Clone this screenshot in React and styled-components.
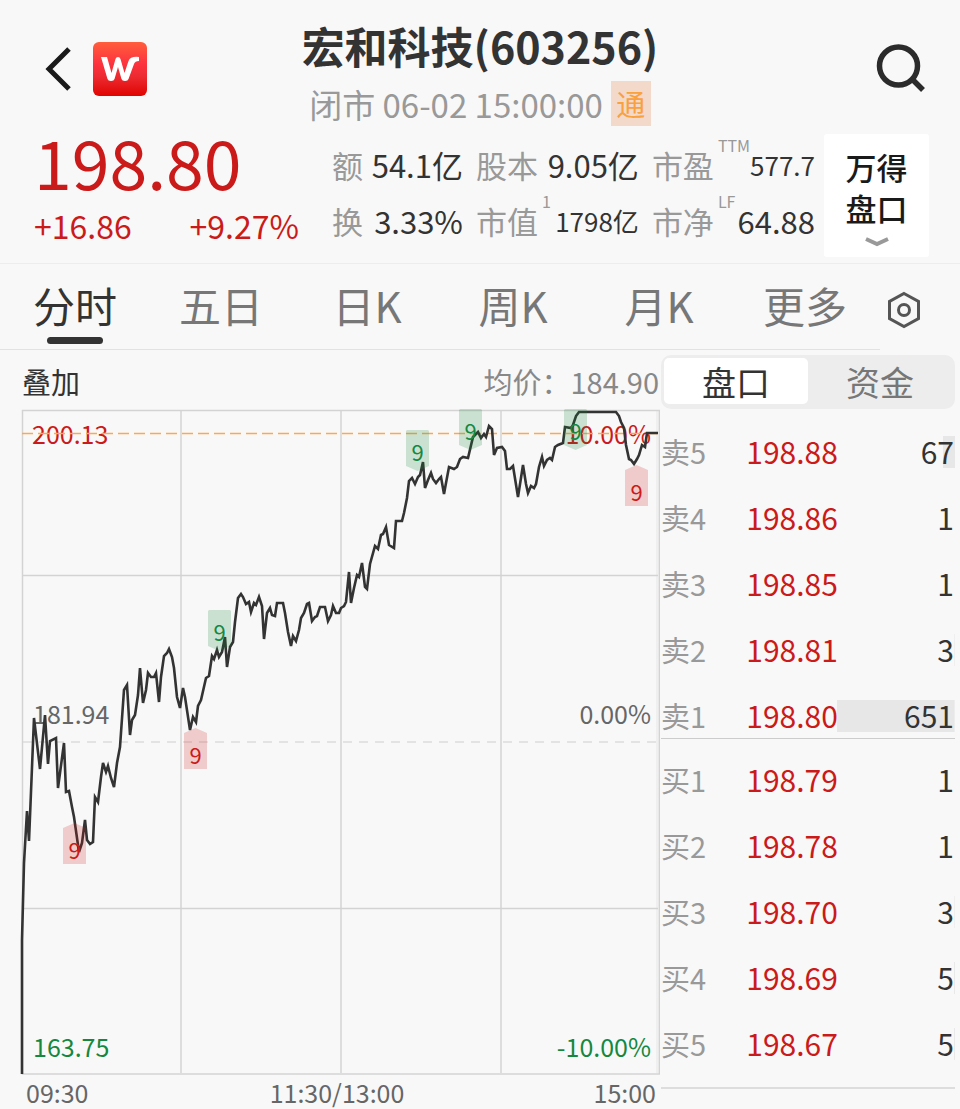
import React, { useState } from 'react'
import styled, { createGlobalStyle } from 'styled-components'

const GlobalStyle = createGlobalStyle`
  * {
    box-sizing: border-box;
  }

  body {
    margin: 0;
    background: #f8f8f8;
    color: #333;
    font-family: 'Noto Sans CJK SC', 'Liberation Sans', sans-serif;
  }

  button {
    margin: 0;
    padding: 0;
    border: 0;
    background: none;
    color: inherit;
    font: inherit;
    cursor: pointer;
  }

  h1, p, dl, dd {
    margin: 0;
  }
`

const Header = styled.header`
  display: grid;
  grid-template-columns: 1fr auto 1fr;
  padding: 16px 32px 0;
  height: 134px;
`

const HeaderSide = styled.div`
  display: flex;
  align-items: center;
  justify-content: ${props => (props.$end ? 'flex-end' : 'flex-start')};
  gap: 16px;
  height: 106px;
  padding-left: 10px;
`

const IconButton = styled.button`
  display: flex;
  align-items: center;
  justify-content: center;
`

const Titles = styled.div`
  display: flex;
  flex-direction: column;
  align-items: center;
`

const StockName = styled.h1`
  font-size: 43px;
  font-weight: 700;
  line-height: 58px;
`

const Status = styled.p`
  display: flex;
  align-items: center;
  gap: 8px;
  margin-top: 7px;
  color: #999;
  font-size: 33px;
  line-height: 44px;
`

const Badge = styled.span`
  width: 40px;
  background: #f3d9ca;
  color: #f9a03f;
  font-size: 29px;
  line-height: 45px;
  text-align: center;
`

const Quote = styled.section`
  display: flex;
  padding: 0 31px 6px 34px;
  border-bottom: 1px solid #ededed;
`

const PriceBlock = styled.div`
  flex: 265;
  color: #cb1a1a;
`

const Price = styled.p`
  font-size: 68px;
  line-height: 54px;
`

const Changes = styled.p`
  display: flex;
  justify-content: space-between;
  margin-top: 7px;
  font-size: 32px;
  line-height: 60px;
`

const Stats = styled.dl`
  flex: 483;
  display: grid;
  grid-template-columns: 131fr 163fr 163fr;
  grid-auto-rows: 56px;
  column-gap: 13px;
  margin-left: 33px;
`

const Stat = styled.div`
  display: flex;
  justify-content: space-between;
  font-size: 31px;
  line-height: 62px;
  white-space: nowrap;

  dt {
    display: flex;
    color: #999;
  }

  dd {
    font-size: ${props => (props.$small ? 26 : 31)}px;
  }
`

const Sup = styled.sup`
  margin-left: 4px;
  font-size: 16px;
  line-height: 22px;
`

const PanelButton = styled.button`
  display: flex;
  flex-direction: column;
  align-items: center;
  width: 105px;
  height: 123px;
  margin-left: 9px;
  padding-top: 12px;
  border-radius: 3px;
  background: #fff;
  color: #1a1a1a;
  font-size: 31px;
  font-weight: 500;
  line-height: 41px;

  svg {
    margin-top: 8px;
  }
`

const Tabs = styled.nav`
  display: flex;
  height: 86px;
`

const TabList = styled.div`
  flex: 1;
  display: grid;
  grid-template-columns: repeat(6, 1fr);
  padding: 0 2px;
  border-bottom: 1px solid #e2e2e2;
`

const Tab = styled.button`
  display: flex;
  flex-direction: column;
  align-items: center;
  padding-top: 10px;
  color: ${props => (props.$active ? '#333' : '#777')};
  font-size: 42px;
  line-height: 61px;

  &::after {
    content: '';
    width: 56px;
    height: 7px;
    margin-top: 2px;
    border-radius: 4px;
    background: ${props => (props.$active ? '#333' : 'transparent')};
  }
`

const Settings = styled(IconButton)`
  width: 48px;
  margin: 6px 32px 0 0;
`

const Body = styled.main`
  display: grid;
  grid-template-columns: 11fr 5fr;
`

const ChartHead = styled.div`
  display: flex;
  justify-content: space-between;
  height: 50px;
  padding: 0 1px 0 22px;
  font-size: 29px;
  line-height: 62px;
`

const Average = styled.span`
  color: #888;
`

const ChartSvg = styled.svg`
  display: block;
  width: 100%;
  height: auto;
  font-size: 25px;
`

const Axis = styled.div`
  display: flex;
  justify-content: space-between;
  padding: 0 4px 0 26px;
  color: #666;
  font-size: 25px;
  line-height: 33px;

  /* keeps the lunch break label on the middle grid line */
  span:nth-child(2) {
    margin-right: 8px;
  }
`

const Side = styled.aside`
  padding: 5px 5px 0 1px;
`

const Segmented = styled.div`
  display: grid;
  grid-template-columns: 1fr 1fr;
  height: 54px;
  padding: 3px;
  border-radius: 10px;
  background: #ededed;
`

const Segment = styled.button`
  height: 46px;
  border-radius: 5px;
  background: ${props => (props.$active ? '#fff' : 'transparent')};
  color: ${props => (props.$active ? '#333' : '#777')};
  font-size: 34px;
  line-height: 48px;
`

const Book = styled.table`
  width: 100%;
  table-layout: fixed;
  border-collapse: collapse;
  border-bottom: 2px solid #ddd;
  font-size: 30px;
  line-height: 30px;
  text-align: left;
  white-space: nowrap;

  th, td {
    padding: 27px 0 7px;
    font-weight: 400;
    vertical-align: top;
  }

  th {
    width: 29%;
    color: #999;
    font-size: 29px;
  }

  tbody:first-child {
    border-bottom: 1px solid #ccc;
  }

  tbody:first-child tr:last-child > * {
    padding-bottom: 6px;
  }

  tbody:last-child th, tbody:last-child td {
    padding: 25px 0 9px;
  }

  tbody:last-child tr:last-child > * {
    padding-bottom: 27px;
  }
`

const PriceCell = styled.td`
  width: 31%;
  color: #cb1a1a;
`

const Volume = styled.div`
  height: 32px;
  padding-right: 1px;
  background: linear-gradient(#e7e7e7, #e7e7e7) right / 0 100% no-repeat;
  text-align: right;
`

const STATS = [
  { label: '额', value: '54.1亿' },
  { label: '股本', value: '9.05亿' },
  { label: '市盈', sup: 'TTM', value: '577.7', small: true },
  { label: '换', value: '3.33%' },
  { label: '市值', sup: '1', value: '1798亿', small: true },
  { label: '市净', sup: 'LF', value: '64.88' },
]

const TABS = ['分时', '五日', '日K', '周K', '月K', '更多']

const SELLS = [
  ['卖5', '198.88', 67],
  ['卖4', '198.86', 1],
  ['卖3', '198.85', 1],
  ['卖2', '198.81', 3],
  ['卖1', '198.80', 651],
]

const BUYS = [
  ['买1', '198.79', 1],
  ['买2', '198.78', 1],
  ['买3', '198.70', 3],
  ['买4', '198.69', 5],
  ['买5', '198.67', 5],
]

const MAX_VOLUME = 651

const MARKS = [
  { x: 63, y: 823 },
  { x: 184, y: 728 },
  { x: 625, y: 465 },
  { x: 208, y: 610, sell: true },
  { x: 406, y: 430, sell: true },
  { x: 459, y: 409, sell: true },
  { x: 564, y: 409, sell: true },
]

const LINE =
  '22,1074 22,940 24,863 27,811 29,841 34,718 40,769 45,715 48,764 50,741 56,738 58,788 64,743 66,792 69,791 ' +
  '72,807 74,817 79,852 82,843 85,820 87,840 90,844 93,842 95,797 98,802 101,777 103,763 106,772 108,766 111,778 ' +
  '114,787 117,763 120,747 124,690 127,685 130,735 132,720 135,715 138,695 140,668 143,703 146,690 148,673 ' +
  '151,677 154,677 156,673 159,702 161,677 164,656 167,653 169,649 172,657 174,668 177,697 180,708 183,688 ' +
  '185,697 190,730 193,717 196,722 198,706 201,700 206,678 209,676 212,656 214,659 217,650 219,657 222,652 ' +
  '225,637 227,667 230,647 233,642 235,622 238,598 241,594 243,597 246,604 249,602 251,612 254,603 256,605 ' +
  '259,597 262,606 264,639 267,613 270,608 272,615 275,616 277,603 283,603 285,613 288,632 291,646 293,636 ' +
  '296,641 299,630 301,618 304,613 307,604 309,603 312,621 315,617 317,616 320,607 325,607 328,621 331,615 ' +
  '333,606 336,613 339,613 341,608 344,606 346,602 349,572 351,603 354,588 357,575 359,577 362,563 365,587 ' +
  '367,589 370,564 375,546 378,549 381,535 383,534 386,527 389,545 394,548 396,521 402,521 404,513 407,498 ' +
  '409,481 412,478 415,484 418,477 420,475 423,462 425,488 428,480 431,473 433,479 436,483 439,479 441,477 ' +
  '444,494 446,483 449,467 454,469 457,467 460,459 463,457 468,458 473,437 478,432 481,438 484,434 486,437 ' +
  '489,426 492,429 494,455 497,448 502,447 505,451 507,469 510,469 513,466 518,497 523,465 526,484 528,493 ' +
  '531,486 534,488 536,484 539,467 542,457 544,466 547,460 550,458 552,460 555,447 558,445 563,443 565,427 ' +
  '571,428 573,425 576,416 579,412 616,412 619,416 621,422 624,428 626,445 629,459 631,460 634,464 637,459 ' +
  '639,455 642,445 645,447 647,433 658,433'

const Mark = ({ x, y, sell }) => (
  <g transform={`translate(${x} ${y})`} fill={sell ? '#15883e' : '#cb1a1a'}>
    <path
      d={sell ? 'M1 0H22L23 1V36L11.5 41L0 36V1Z' : 'M0 5L11.5 0L23 5V41H0Z'}
      fillOpacity="0.2"
    />
    <text x="11.5" y={sell ? 31 : 36} fontSize="22" textAnchor="middle">9</text>
  </g>
)

const Chart = () => (
  <ChartSvg viewBox="0 400 660 676" role="img" aria-label="分时走势">
    <g fill="none" stroke="#d3d3d3" strokeWidth="1.5">
      <path d="M656 411H659V1073H656Z" fill="#efefef" stroke="none" />
      <path d="M22.5 410.5H659.5V1074H22.5Z" />
      <path d="M181 411V1073M341 411V1073M501 411V1073M23 575.5H658M23 908.5H658" />
      <path d="M23 742H657" stroke="#dcdcdc" strokeDasharray="9 7" />
    </g>
    <g fill="#cb1a1a">
      <text x="32" y="444">200.13</text>
      <text x="651" y="444" textAnchor="end">10.00%</text>
    </g>
    <g fill="#666">
      <text x="33" y="724">181.94</text>
      <text x="651" y="724" textAnchor="end">0.00%</text>
    </g>
    <g fill="#15883e">
      <text x="33" y="1057">163.75</text>
      <text x="651" y="1057" textAnchor="end">-10.00%</text>
    </g>
    <path d="M22 433.5H658" stroke="#fda850" strokeWidth="1.5" strokeDasharray="11 5" />
    <polyline points={LINE} fill="none" stroke="#333" strokeWidth="2.6" />
    {MARKS.map(mark => (
      <Mark key={`${mark.x}-${mark.y}`} {...mark} />
    ))}
  </ChartSvg>
)

const BookRow = ({ name, price, volume }) => (
  <tr>
    <th scope="row">{name}</th>
    <PriceCell>{price}</PriceCell>
    <td>
      <Volume style={{ backgroundSize: `${(volume / MAX_VOLUME) * 100}% 100%` }}>
        {volume}
      </Volume>
    </td>
  </tr>
)

const App = () => {
  const [tab, setTab] = useState('分时')
  const [panel, setPanel] = useState('盘口')

  return (
    <div>
      <GlobalStyle />
      <Header>
        <HeaderSide>
          <IconButton aria-label="返回">
            <svg width="35" height="50" viewBox="0 0 35 50" fill="none" stroke="#1a1a1a" strokeWidth="5">
              <path d="M27 5L7 25L27 45" />
            </svg>
          </IconButton>
          <svg width="54" height="54" viewBox="0 0 54 54">
            <defs>
              <linearGradient id="logo" x1="0" y1="0" x2="0" y2="1">
                <stop offset="0" stopColor="#ff5e3c" />
                <stop offset="0.4" stopColor="#fd333f" />
                <stop offset="0.65" stopColor="#ec2a30" />
                <stop offset="1" stopColor="#e00400" />
              </linearGradient>
            </defs>
            <rect width="54" height="54" rx="6" fill="url(#logo)" />
            <path
              d="M8 15H14L18.500 31L22.500 17Q23 15 25 15Q27 15 27.500 17L31.500 31L35.500 19Q37.500 14 46 15V19Q42 19 41 22L35.500 37Q35 39 32 39Q29 39 28.500 37L25 25L21.500 37Q21 39 18 39Q15 39 14.500 37Z"
              fill="#fff"
            />
          </svg>
        </HeaderSide>
        <Titles>
          <StockName>宏和科技(603256)</StockName>
          <Status>
            闭市 06-02 15:00:00
            <Badge>通</Badge>
          </Status>
        </Titles>
        <HeaderSide $end>
          <IconButton aria-label="搜索">
            <svg width="54" height="54" viewBox="0 0 54 54" fill="none" stroke="#2b2b2b" strokeWidth="5.500">
              <circle cx="24.500" cy="24" r="19" />
              <path d="M38 37L49 48" />
            </svg>
          </IconButton>
        </HeaderSide>
      </Header>

      <Quote>
        <PriceBlock>
          <Price>198.80</Price>
          <Changes>
            <span>+16.86</span>
            <span>+9.27%</span>
          </Changes>
        </PriceBlock>
        <Stats>
          {STATS.map(stat => (
            <Stat key={stat.label} $small={stat.small}>
              <dt>
                {stat.label}
                {stat.sup && <Sup>{stat.sup}</Sup>}
              </dt>
              <dd>{stat.value}</dd>
            </Stat>
          ))}
        </Stats>
        <PanelButton>
          <span>万得</span>
          <span>盘口</span>
          <svg width="24" height="12" viewBox="0 0 24 12" fill="none" stroke="#999" strokeWidth="4">
            <path d="M1 3L12 8L23 3" />
          </svg>
        </PanelButton>
      </Quote>

      <Tabs>
        <TabList>
          {TABS.map(name => (
            <Tab key={name} $active={name === tab} onClick={() => setTab(name)}>
              {name}
            </Tab>
          ))}
        </TabList>
        <Settings aria-label="设置">
          <svg width="36" height="38" viewBox="0 0 36 38" fill="none" stroke="#555" strokeWidth="3">
            <path d="M18 2.500L32.500 10.500V27.500L18 35.500L3.500 27.500V10.500Z" />
            <circle cx="18" cy="19" r="5.500" />
          </svg>
        </Settings>
      </Tabs>

      <Body>
        <section>
          <ChartHead>
            <span>叠加</span>
            <Average>均价：184.90</Average>
          </ChartHead>
          <Chart />
          <Axis>
            <span>09:30</span>
            <span>11:30/13:00</span>
            <span>15:00</span>
          </Axis>
        </section>
        <Side>
          <Segmented>
            {['盘口', '资金'].map(name => (
              <Segment key={name} $active={name === panel} onClick={() => setPanel(name)}>
                {name}
              </Segment>
            ))}
          </Segmented>
          <Book>
            <tbody>
              {SELLS.map(([name, price, volume]) => (
                <BookRow key={name} name={name} price={price} volume={volume} />
              ))}
            </tbody>
            <tbody>
              {BUYS.map(([name, price, volume]) => (
                <BookRow key={name} name={name} price={price} volume={volume} />
              ))}
            </tbody>
          </Book>
        </Side>
      </Body>
    </div>
  )
}

export default App
